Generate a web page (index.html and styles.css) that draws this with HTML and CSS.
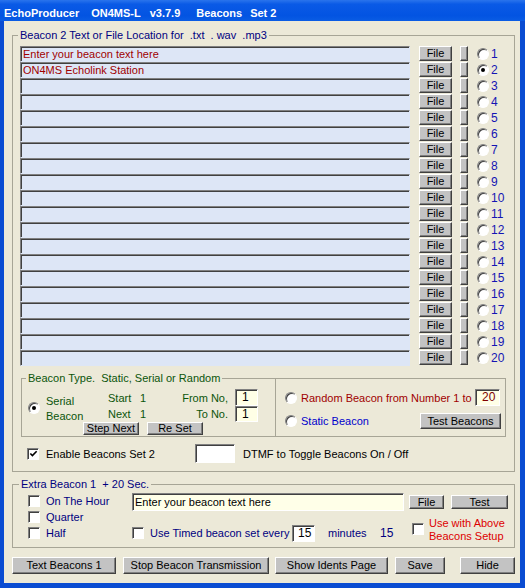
FILE: index.html
```html
<!DOCTYPE html>
<html>
<head>
<meta charset="utf-8">
<title>EchoProducer</title>
<link rel="stylesheet" href="styles.css">
</head>
<body>
<div class="window">
  <div class="titlebar"><span class="t1">EchoProducer</span><span class="t2">ON4MS-L</span><span class="t3">v3.7.9</span><span class="t4">Beacons</span><span class="t5">Set 2</span></div>
  <div class="client">
    <fieldset class="group main">
      <legend>Beacon 2 Text or File Location for &nbsp;.txt &nbsp;. wav &nbsp;.mp3</legend>
      <div class="rows">
        <div class="row"><div class="field">Enter your beacon text here</div><div class="btn file">File</div><div class="btn tiny"></div><span class="radio"></span><span class="num">1</span></div>
        <div class="row"><div class="field">ON4MS Echolink Station</div><div class="btn file">File</div><div class="btn tiny"></div><span class="radio checked"></span><span class="num">2</span></div>
        <div class="row"><div class="field"></div><div class="btn file">File</div><div class="btn tiny"></div><span class="radio"></span><span class="num">3</span></div>
        <div class="row"><div class="field"></div><div class="btn file">File</div><div class="btn tiny"></div><span class="radio"></span><span class="num">4</span></div>
        <div class="row"><div class="field"></div><div class="btn file">File</div><div class="btn tiny"></div><span class="radio"></span><span class="num">5</span></div>
        <div class="row"><div class="field"></div><div class="btn file">File</div><div class="btn tiny"></div><span class="radio"></span><span class="num">6</span></div>
        <div class="row"><div class="field"></div><div class="btn file">File</div><div class="btn tiny"></div><span class="radio"></span><span class="num">7</span></div>
        <div class="row"><div class="field"></div><div class="btn file">File</div><div class="btn tiny"></div><span class="radio"></span><span class="num">8</span></div>
        <div class="row"><div class="field"></div><div class="btn file">File</div><div class="btn tiny"></div><span class="radio"></span><span class="num">9</span></div>
        <div class="row"><div class="field"></div><div class="btn file">File</div><div class="btn tiny"></div><span class="radio"></span><span class="num">10</span></div>
        <div class="row"><div class="field"></div><div class="btn file">File</div><div class="btn tiny"></div><span class="radio"></span><span class="num">11</span></div>
        <div class="row"><div class="field"></div><div class="btn file">File</div><div class="btn tiny"></div><span class="radio"></span><span class="num">12</span></div>
        <div class="row"><div class="field"></div><div class="btn file">File</div><div class="btn tiny"></div><span class="radio"></span><span class="num">13</span></div>
        <div class="row"><div class="field"></div><div class="btn file">File</div><div class="btn tiny"></div><span class="radio"></span><span class="num">14</span></div>
        <div class="row"><div class="field"></div><div class="btn file">File</div><div class="btn tiny"></div><span class="radio"></span><span class="num">15</span></div>
        <div class="row"><div class="field"></div><div class="btn file">File</div><div class="btn tiny"></div><span class="radio"></span><span class="num">16</span></div>
        <div class="row"><div class="field"></div><div class="btn file">File</div><div class="btn tiny"></div><span class="radio"></span><span class="num">17</span></div>
        <div class="row"><div class="field"></div><div class="btn file">File</div><div class="btn tiny"></div><span class="radio"></span><span class="num">18</span></div>
        <div class="row"><div class="field"></div><div class="btn file">File</div><div class="btn tiny"></div><span class="radio"></span><span class="num">19</span></div>
        <div class="row"><div class="field"></div><div class="btn file">File</div><div class="btn tiny"></div><span class="radio"></span><span class="num">20</span></div>
      </div>

      <fieldset class="group type">
        <legend>Beacon Type. &nbsp;Static, Serial or Random</legend>
        <div class="panes">
          <div class="pane left">
            <span class="radio checked r-serial"></span>
            <div class="serial">Serial<br>Beacon</div>
            <div class="stat s1"><span class="stk">Start</span>1</div>
            <div class="stat s2"><span class="stk">Next</span>1</div>
            <div class="lbl l1">From No,</div>
            <div class="lbl l2">To No.</div>
            <div class="box b1">1</div>
            <div class="box b2">1</div>
            <div class="sbtns"><div class="btn small">Step Next</div><div class="btn small">Re Set</div></div>
          </div>
          <div class="pane right">
            <div class="prow p1"><span class="radio"></span><span class="random">Random Beacon from Number 1 to</span><div class="box b20">20</div></div>
            <div class="prow p2"><span class="radio"></span><span class="static">Static Beacon</span><div class="btn test">Test Beacons</div></div>
          </div>
        </div>
      </fieldset>

      <div class="enable">
        <span class="check"><svg viewBox="0 0 10 10" width="10" height="10"><polyline points="1.5,4.5 3.8,6.8 8.5,2" fill="none" stroke="#000" stroke-width="1.8"/></svg></span>
        <span class="enlbl">Enable Beacons Set 2</span>
        <div class="dtmf"></div>
        <span class="dtmftxt">DTMF to Toggle Beacons On / Off</span>
      </div>
    </fieldset>

    <fieldset class="group extra">
      <legend>Extra Beacon 1 &nbsp;+ 20 Sec.</legend>
      <div class="xgrid">
        <div class="checks">
          <div class="crow"><span class="check"></span><span class="clbl">On The Hour</span></div>
          <div class="crow"><span class="check"></span><span class="clbl">Quarter</span></div>
          <div class="crow"><span class="check"></span><span class="clbl">Half</span></div>
        </div>
        <div class="xright">
          <div class="xrow1"><div class="xinput">Enter your beacon text here</div><div class="btn xfile">File</div><div class="btn xtest">Test</div></div>
          <div class="xrow2">
            <span class="check c-timed"></span>
            <span class="timed">Use Timed beacon set every</span>
            <div class="box b15">15</div>
            <span class="minutes">minutes</span>
            <span class="fifteen">15</span>
            <span class="check c-above"></span>
            <span class="above">Use with Above<br>Beacons Setup</span>
          </div>
        </div>
      </div>
    </fieldset>

    <div class="bottom">
      <div class="btn bb bb1">Text Beacons 1</div>
      <div class="btn bb bb2">Stop Beacon Transmission</div>
      <div class="btn bb bb3">Show Idents Page</div>
      <div class="btn bb bb4">Save</div>
      <div class="btn bb bb5">Hide</div>
    </div>
  </div>
</div>
</body>
</html>
```

FILE: styles.css
```css
* { box-sizing: border-box; }
body {
  margin: 0;
  font-family: "Liberation Sans", Arial, sans-serif;
  font-size: 11px;
  color: #000;
}
.window {
  width: 525px;
  height: 588px;
  display: flex;
  flex-direction: column;
  background: #0a4cd2;
}
.titlebar {
  height: 21px;
  display: flex;
  padding: 5px 0 0 4px;
  line-height: 16px;
  color: #fff;
  font-weight: bold;
  white-space: nowrap;
  background: linear-gradient(#2a74ec, #0a5ae6 20%, #0354e2 75%, #0a5ce4);
}
.t2 { margin-left: 12px; }
.t3 { margin-left: 9px; }
.t4 { margin-left: 16px; }
.t5 { margin-left: 8px; }
.client {
  flex: 1;
  margin: 0 5px 5px 4px;
  background: #ece9d8;
  display: flex;
  flex-direction: column;
}

/* group boxes */
.group {
  border: 1px solid #a7a596;
  margin: 0;
  padding: 0;
  min-width: 0;
}
.group > legend {
  padding: 0 2px;
  line-height: 13px;
  color: #000080;
}
.main {
  width: 503px;
  margin: 8px 0 0 8px;
}
.main > legend { margin-left: 5px; }

/* rows */
.rows {
  margin: 4px 0 0 7px;
  display: flex;
  flex-direction: column;
}
.row {
  height: 16px;
  display: flex;
  align-items: flex-start;
}
.field {
  width: 390px;
  height: 16px;
  background: #dde6f6;
  border: 1px solid;
  border-color: #808080 #dde6f6 #dde6f6 #808080;
  box-shadow: inset 1px 1px 0 #404040;
  padding-left: 2px;
  line-height: 14px;
  color: #a00000;
  white-space: nowrap;
}
.btn {
  background: #c3c3c3;
  border: 1px solid;
  border-color: #fff #404040 #404040 #fff;
  box-shadow: inset -1px -1px 0 #808080;
  text-align: center;
  color: #000;
  white-space: nowrap;
}
.file {
  width: 33px;
  height: 15px;
  margin-left: 9px;
  line-height: 13px;
}
.tiny {
  width: 8px;
  height: 15px;
  margin-left: 8px;
}
.radio {
  flex: none;
  display: inline-block;
  position: relative;
  width: 12px;
  height: 12px;
  border-radius: 50%;
  background: #fff;
  border: 1px solid;
  border-color: #808080 #fff #fff #808080;
  box-shadow: inset 1px 1px 0 #404040;
}
.radio.checked::after {
  content: "";
  position: absolute;
  left: 3px;
  top: 3px;
  width: 4px;
  height: 4px;
  border-radius: 50%;
  background: #000;
}
.row .radio {
  margin: 2px 0 0 9px;
}
.num {
  margin-left: 2px;
  font-size: 12px;
  line-height: 16px;
  color: #1414b4;
}

/* beacon type */
.type {
  width: 485px;
  margin: 6px 0 0 8px;
}
.type > legend {
  margin-left: 4px;
  color: #0b550b;
}
.panes {
  display: flex;
  margin-top: -7px;
  height: 58px;
}
.pane.left {
  width: 254px;
  border-right: 1px solid #a7a596;
  padding: 11px 0 0 6px;
  display: grid;
  grid-template-columns: 12px 68px 64px 63px 23px;
  grid-template-rows: 17px 16px 13px;
  color: #0b550b;
}
.r-serial {
  grid-column: 1;
  grid-row: 1 / 3;
  margin-top: 13px;
}
.serial {
  grid-column: 2;
  grid-row: 1 / 3;
  margin: 5px 0 0 6px;
  line-height: 15px;
}
.stat {
  grid-column: 3;
  align-self: center;
  line-height: 14px;
  white-space: nowrap;
}
.s1 { grid-row: 1; }
.s2 { grid-row: 2; }
.stk {
  display: inline-block;
  width: 32px;
}
.lbl {
  grid-column: 4;
  align-self: center;
  text-align: right;
  padding-right: 7px;
  line-height: 14px;
  white-space: nowrap;
}
.l1 { grid-row: 1; }
.l2 { grid-row: 2; }
.box {
  background: #ffffe6;
  border: 1px solid;
  border-color: #808080 #fff #fff #808080;
  box-shadow: inset 1px 1px 0 #404040;
  color: #000;
  font-size: 12px;
}
.b1, .b2 {
  grid-column: 5;
  padding-left: 6px;
  line-height: 15px;
}
.b1 { grid-row: 1; height: 17px; }
.b2 { grid-row: 2; height: 16px; line-height: 14px; }
.sbtns {
  grid-column: 2 / 6;
  grid-row: 3;
  display: flex;
  gap: 8px;
  padding-left: 43px;
}
.small {
  width: 56px;
  height: 13px;
  line-height: 11px;
  overflow: hidden;
}
.pane.right {
  flex: 1;
  padding: 11px 4px 0 9px;
  display: flex;
  flex-direction: column;
}
.prow {
  display: flex;
  align-items: center;
}
.p1 { height: 17px; }
.p2 { height: 16px; margin-top: 7px; }
.random {
  margin-left: 4px;
  color: #a00000;
}
.static {
  margin-left: 4px;
  color: #0000cc;
}
.b20 {
  margin: 0 1px 0 auto;
  width: 25px;
  height: 17px;
  padding-left: 6px;
  line-height: 15px;
  color: #800000;
}
.test {
  margin-left: auto;
  width: 81px;
  height: 16px;
  line-height: 14px;
}

/* enable row */
.enable {
  display: flex;
  align-items: center;
  height: 19px;
  margin: 7px 0 8px 14px;
}
.check {
  flex: none;
  display: inline-flex;
  align-items: center;
  justify-content: center;
  width: 12px;
  height: 12px;
  background: #fff;
  border: 1px solid;
  border-color: #808080 #fff #fff #808080;
  box-shadow: inset 1px 1px 0 #404040;
}
.check svg { display: block; margin: 1px 0 0 1px; }
.enlbl {
  width: 149px;
  margin-left: 7px;
}
.dtmf {
  width: 40px;
  height: 19px;
  background: #fff;
  border: 1px solid;
  border-color: #808080 #fff #fff #808080;
  box-shadow: inset 1px 1px 0 #404040;
}
.dtmftxt { margin-left: 8px; }

/* extra beacon */
.extra {
  width: 503px;
  margin: 6px 0 0 8px;
}
.extra > legend { margin-left: 6px; }
.xgrid {
  display: flex;
  padding-top: 2px;
}
.checks {
  width: 119px;
  padding-left: 15px;
  display: flex;
  flex-direction: column;
}
.crow {
  height: 16px;
  display: flex;
  align-items: center;
}
.clbl {
  margin-left: 6px;
  color: #000080;
}
.xright {
  display: flex;
  flex-direction: column;
}
.xrow1 {
  display: flex;
  align-items: center;
  height: 18px;
}
.xinput {
  width: 272px;
  height: 18px;
  background: #ffffe8;
  border: 1px solid;
  border-color: #808080 #fff #fff #808080;
  box-shadow: inset 1px 1px 0 #404040;
  padding-left: 2px;
  line-height: 16px;
  white-space: nowrap;
}
.xfile {
  width: 35px;
  height: 14px;
  margin-left: 5px;
  line-height: 12px;
}
.xtest {
  width: 57px;
  height: 14px;
  margin-left: 7px;
  line-height: 12px;
}
.xrow2 {
  display: flex;
  align-items: flex-start;
  height: 33px;
  margin-top: 3px;
  color: #000080;
}
.c-timed { margin-top: 13px; }
.timed {
  width: 142px;
  margin: 12px 0 0 6px;
  line-height: 14px;
}
.b15 {
  width: 23px;
  height: 17px;
  margin-top: 11px;
  padding-left: 5px;
  line-height: 15px;
  background: #ffffff;
}
.minutes {
  width: 52px;
  margin: 12px 0 0 13px;
  line-height: 14px;
}
.fifteen {
  width: 32px;
  margin-top: 11px;
  font-size: 12px;
  line-height: 16px;
}
.c-above { margin-top: 9px; }
.above {
  margin: 3px 0 0 5px;
  line-height: 13px;
  color: #dd0000;
}

/* bottom buttons */
.bottom {
  display: flex;
  margin: 9px 0 0 8px;
  height: 17px;
}
.bb {
  height: 17px;
  line-height: 15px;
}
.bb1 { width: 104px; }
.bb2 { width: 146px; margin-left: 7px; }
.bb3 { width: 113px; margin-left: 6px; }
.bb4 { width: 50px; margin-left: 7px; }
.bb5 { width: 55px; margin-left: 15px; }
```
